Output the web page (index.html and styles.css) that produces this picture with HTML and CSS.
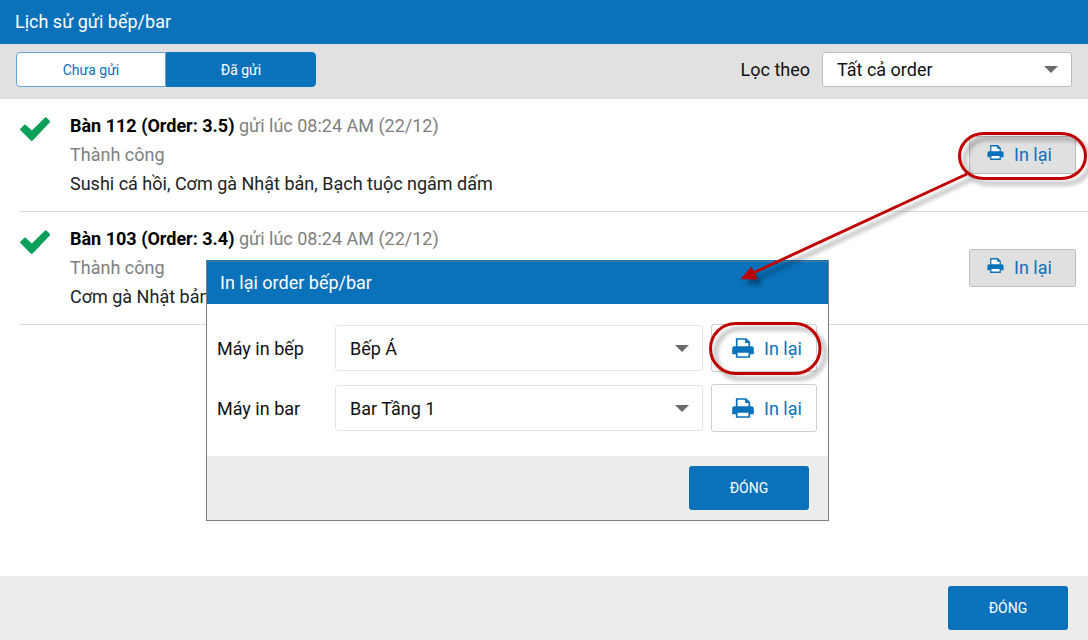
FILE: index.html
```html
<!DOCTYPE html>
<html lang="vi">
<head>
<meta charset="utf-8">
<meta name="viewport" content="width=device-width, initial-scale=1">
<title>Lịch sử gửi bếp/bar</title>
<link rel="stylesheet" href="styles.css">
</head>
<body>
<svg class="defs" aria-hidden="true">
  <symbol id="printer" viewBox="0 0 22 20">
    <path d="M4.700 9V1h9.200l3.400 3.400V9" fill="#fff" stroke="currentColor" stroke-width="1.700"/>
    <path d="M13.200 0.500v4.400h4.600z" fill="currentColor"/>
    <path d="M2.500 8.300h17a2.300 2.300 0 0 1 2.300 2.300v4.800a.8.800 0 0 1-.8.800H1a.8.800 0 0 1-.8-.8v-4.800a2.300 2.300 0 0 1 2.300-2.300z" fill="currentColor"/>
    <path d="M4.700 13.800h12.600v5.200H4.700z" fill="#fff" stroke="currentColor" stroke-width="1.700"/>
  </symbol>
  <symbol id="check" viewBox="0 0 30 24">
    <path d="M0.300 11.700 4.300 7.700Q5 7.200 5.700 7.800L11.800 13.600 24.800 0.700Q25.800 0 26.700 0.700L29.700 3.800Q30.300 4.700 29.700 5.500L12.700 23.500Q11.700 24.300 10.700 23.500L0.300 12.900Q-.2 12.300.3 11.700z" fill="#0aa058"/>
  </symbol>
</svg>

<div class="page">
  <header class="titlebar"><h1 class="title">Lịch sử gửi bếp/bar</h1></header>

  <div class="toolbar">
    <div class="tabs">
      <button class="tab" type="button">Chưa gửi</button>
      <button class="tab tab-active" type="button">Đã gửi</button>
    </div>
    <div class="filter">
      <label for="filter">Lọc theo</label>
      <div class="picker">
        <select id="filter" class="select select-filter"><option>Tất cả order</option></select>
      </div>
    </div>
  </div>

  <main class="list">
    <article class="entry">
      <svg class="check"><use href="#check"/></svg>
      <div class="entry-text">
        <p class="muted"><strong class="order">Bàn 112 (Order: 3.5)</strong> gửi lúc 08:24 AM (22/12)</p>
        <p class="muted">Thành công</p>
        <p>Sushi cá hồi, Cơm gà Nhật bản, Bạch tuộc ngâm dấm</p>
      </div>
      <button class="reprint reprint-small" type="button"><svg class="icon-small"><use href="#printer"/></svg>In lại</button>
    </article>
    <article class="entry">
      <svg class="check"><use href="#check"/></svg>
      <div class="entry-text">
        <p class="muted"><strong class="order">Bàn 103 (Order: 3.4)</strong> gửi lúc 08:24 AM (22/12)</p>
        <p class="muted">Thành công</p>
        <p>Cơm gà Nhật bản</p>
      </div>
      <button class="reprint reprint-small" type="button"><svg class="icon-small"><use href="#printer"/></svg>In lại</button>
    </article>
  </main>

  <footer class="footer"><button class="close" type="button">ĐÓNG</button></footer>

  <section class="dialog" role="dialog" aria-labelledby="dialog-title">
    <header class="dialog-header"><h2 id="dialog-title" class="title">In lại order bếp/bar</h2></header>
    <div class="dialog-body">
      <div class="printer-row">
        <label for="kitchen">Máy in bếp</label>
        <div class="picker">
          <select id="kitchen" class="select select-printer"><option>Bếp Á</option></select>
        </div>
        <button class="reprint reprint-large" type="button"><svg class="icon-large"><use href="#printer"/></svg>In lại</button>
      </div>
      <div class="printer-row">
        <label for="bar">Máy in bar</label>
        <div class="picker">
          <select id="bar" class="select select-printer"><option>Bar Tầng 1</option></select>
        </div>
        <button class="reprint reprint-large" type="button"><svg class="icon-large"><use href="#printer"/></svg>In lại</button>
      </div>
    </div>
    <footer class="footer dialog-footer"><button class="close" type="button">ĐÓNG</button></footer>
  </section>

  <svg class="callouts" viewBox="0 0 1088 640" aria-hidden="true">
    <g fill="none" stroke="#c00000" stroke-width="3">
      <rect x="959.500" y="133.500" width="126" height="45" rx="24" ry="22.500"/>
      <rect x="710.500" y="323.500" width="109.500" height="50" rx="25"/>
      <path d="M967 174 753 273"/>
      <path d="M740.500 279.300 751.500 266.500 757.500 279.600z" fill="#c00000" stroke="none"/>
    </g>
  </svg>
</div>
</body>
</html>
```

FILE: styles.css
```css
* { box-sizing: border-box; }

body {
  margin: 0;
  background: #fff;
  color: #222;
  font-family: Roboto, "Noto Sans", sans-serif;
  font-size: 18px;
}

button, select {
  margin: 0;
  font: inherit;
}

p { margin: 0; }

.defs {
  position: absolute;
  width: 0;
  height: 0;
}

.page {
  position: relative;
  display: flex;
  flex-direction: column;
  min-height: 100vh;
}

.titlebar {
  padding: 0 15px;
  background: #0a72ba;
}

.title {
  margin: 0;
  color: #fff;
  font-size: 18px;
  font-weight: 400;
  line-height: 44px;
}

.toolbar {
  display: flex;
  justify-content: space-between;
  align-items: center;
  padding: 8px 16px 12px;
  background: #e1e1e1;
}

.tabs {
  display: grid;
  grid-template-columns: 150px 150px;
}

.tab {
  height: 35px;
  padding: 0;
  border: 1px solid #5fa5d5;
  border-radius: 4px 0 0 4px;
  background: #fff;
  color: #0a72ba;
  font-size: 14px;
}

.tab-active {
  border-color: #0a72ba;
  border-radius: 0 4px 4px 0;
  background: #0a72ba;
  color: #fff;
}

.filter {
  display: flex;
  align-items: center;
  gap: 12px;
  color: #111;
}

.picker {
  display: grid;
  align-items: center;
}

.picker::after {
  content: "";
  grid-area: 1 / 1;
  justify-self: end;
  margin-right: 14px;
  border: solid transparent;
  border-width: 7px 7px 0;
  border-top-color: #6b6b6b;
  pointer-events: none;
}

.select {
  grid-area: 1 / 1;
  appearance: none;
  width: 100%;
  padding: 0 32px 0 14px;
  border: 1px solid #bcbcbc;
  border-radius: 3px;
  background: #fff;
  color: #111;
}

.select-filter {
  width: 250px;
  height: 35px;
}

.select-printer {
  height: 46px;
  border-color: #e4e4e4;
}

.list { flex: 1; }

.entry {
  display: flex;
  align-items: center;
  gap: 20px;
  margin-left: 20px;
  padding: 12px 12px 13px 0;
  border-bottom: 1px solid #dcdcdc;
}

.check {
  align-self: flex-start;
  width: 30px;
  height: 24px;
  margin-top: 6px;
}

.entry-text {
  flex: 1;
  line-height: 29px;
}

.muted { color: #808080; }

.order {
  color: #000;
  font-weight: 700;
}

.reprint {
  display: flex;
  align-items: center;
  border: 1px solid #d0d0d0;
  border-radius: 3px;
  background: #fff;
  color: #0a72ba;
}

.reprint-small {
  gap: 10px;
  width: 107px;
  height: 38px;
  padding: 0 0 0 17px;
  border-color: #bcbcbc;
  background: #e0e0e0;
}

.reprint-large {
  gap: 10px;
  height: 48px;
  padding: 0 0 0 20px;
}

.icon-small {
  width: 17px;
  height: 15px;
  margin-bottom: 4px;
}

.icon-large {
  width: 22px;
  height: 20px;
}

.footer {
  display: flex;
  justify-content: flex-end;
  padding: 10px 20px;
  background: #ececec;
}

.dialog-footer { padding-right: 19px; }

.close {
  width: 120px;
  height: 44px;
  padding: 0;
  border: 0;
  border-radius: 3px;
  background: #0a72ba;
  color: #fff;
  font-size: 14px;
}

.dialog {
  position: absolute;
  top: 260px;
  left: 206px;
  width: 623px;
  border: 1px solid #808080;
  border-top-color: #0a72ba;
  background: #fff;
}

.dialog-header {
  padding: 0 13px;
  border-top: 1px solid #557a96;
  background: #0a72ba;
}

.dialog-header .title { line-height: 42px; }

.dialog-body {
  display: grid;
  gap: 12px;
  padding: 20px 11px 24px 10px;
  color: #111;
}

.printer-row {
  display: grid;
  grid-template-columns: 110px 1fr 106px;
  column-gap: 8px;
  align-items: center;
}

.callouts {
  position: absolute;
  top: 0;
  left: 0;
  width: 1088px;
  height: 640px;
  overflow: hidden;
  pointer-events: none;
  filter: drop-shadow(5px 5px 2px rgb(0 0 0 / 35%));
}
```
